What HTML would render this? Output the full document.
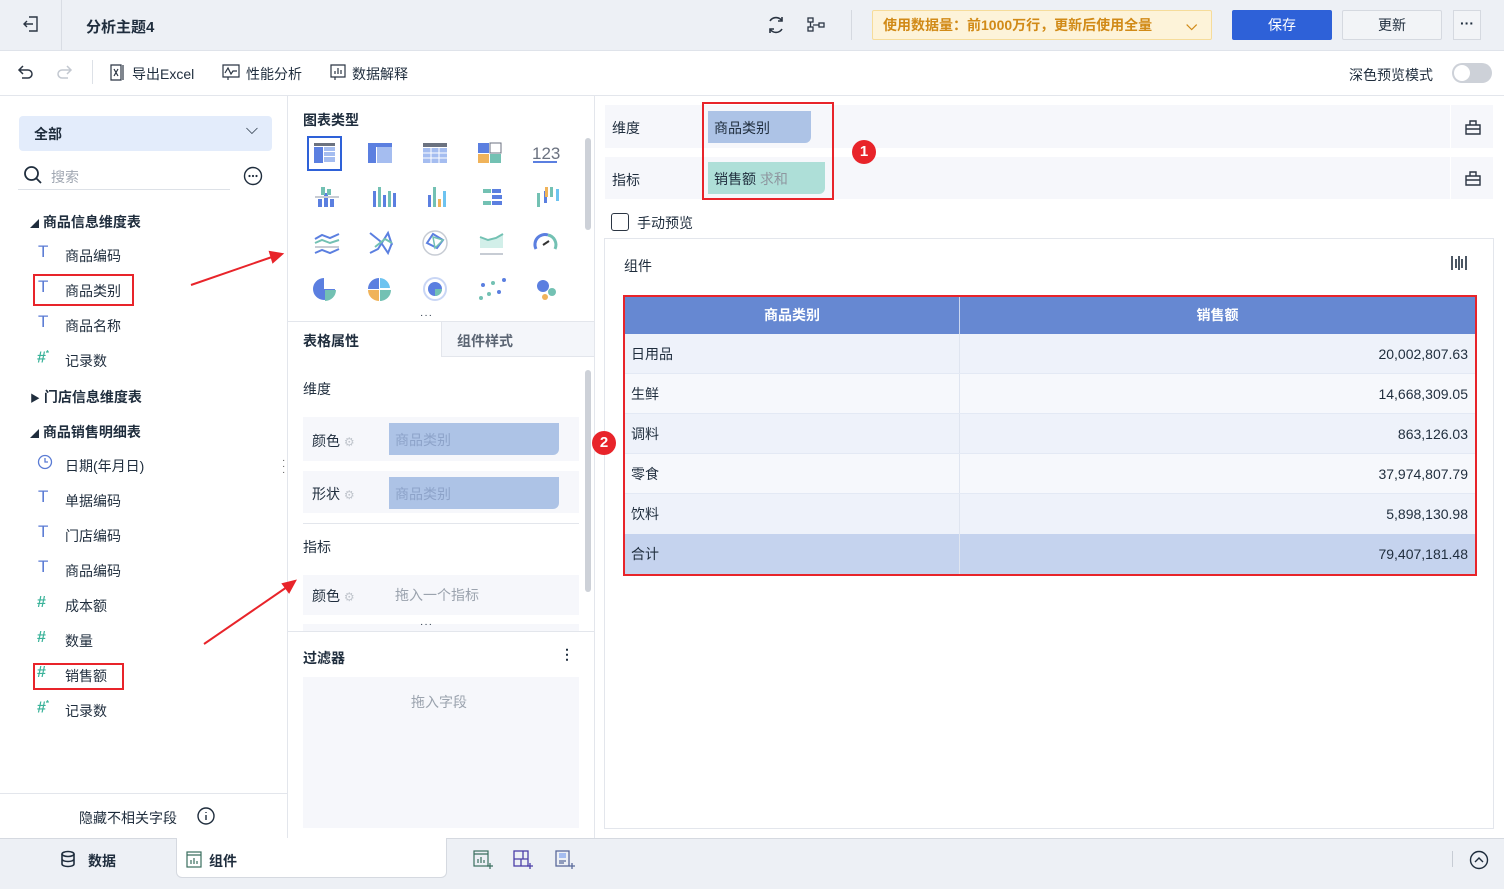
<!DOCTYPE html>
<html><head><meta charset="utf-8"><style>
*{box-sizing:border-box;margin:0;padding:0}
body{width:1504px;height:889px;overflow:hidden;font-family:"Liberation Sans","Noto Sans CJK SC",sans-serif;font-size:14px;color:#1f2d3d;background:#fff;position:relative}
.a{position:absolute}
.b{font-weight:bold}
.red{border:2px solid #e8242a}
.ti{color:#5a7bd4;font-size:17px}
.hs{color:#3bb39a;font-weight:bold;font-size:16px}
</style></head><body>
<!-- header -->
<div class="a" style="left:0;top:0;width:1504px;height:51px;background:#edf0f5;border-bottom:1px solid #dfe3ea"></div>
<div class="a" style="left:61px;top:0;width:1px;height:50px;background:#d9dde4"></div>
<svg class="a" style="left:22px;top:15px" width="18" height="18" viewBox="0 0 18 18" fill="none" stroke="#2b3543" stroke-width="1.4"><path d="M7 2h8v14H7M2 9h9M5 6L2 9l3 3"/></svg>
<div class="a b" style="left:86px;top:16px;font-size:15px">分析主题4</div>
<svg class="a" style="left:766px;top:15px" width="20" height="20" viewBox="0 0 20 20" fill="none" stroke="#2b3543" stroke-width="1.6"><path d="M4 6a7 7 0 0 1 12 0M16 14a7 7 0 0 1-12 0"/><path d="M16 2v4h-4M4 18v-4h4"/></svg>
<svg class="a" style="left:806px;top:15px" width="20" height="20" viewBox="0 0 20 20" fill="none" stroke="#2b3543" stroke-width="1.3"><rect x="2" y="3" width="5" height="4"/><rect x="2" y="12" width="5" height="4"/><rect x="13" y="8" width="5" height="4"/><path d="M4.5 7v5M7 10h6"/></svg>
<div class="a" style="left:851px;top:10px;width:1px;height:30px;background:#d5d9e0"></div>
<div class="a b" style="left:872px;top:10px;width:340px;height:30px;background:#fdf3d9;border:1px solid #f6dc9a;border-radius:2px;color:#d18a17;font-size:14px;line-height:28px;padding-left:10px">使用数据量：前1000万行，更新后使用全量<span style="position:absolute;right:14px;top:0">⌵</span></div>
<div class="a" style="left:1232px;top:10px;width:100px;height:30px;background:#2e61d8;border-radius:2px;color:#fff;text-align:center;line-height:30px">保存</div>
<div class="a" style="left:1342px;top:10px;width:100px;height:30px;background:#f2f4f7;border:1px solid #d5d9e0;border-radius:2px;text-align:center;line-height:28px">更新</div>
<div class="a b" style="left:1453px;top:10px;width:28px;height:30px;background:#f2f4f7;border:1px solid #d5d9e0;text-align:center;line-height:24px">···</div>
<!-- toolbar -->
<div class="a" style="left:0;top:95px;width:1504px;height:1px;background:#e3e6ec"></div>
<svg class="a" style="left:16px;top:63px" width="18" height="18" viewBox="0 0 18 18" fill="none" stroke="#2b3543" stroke-width="1.5"><path d="M4 7h8a4 4 0 0 1 0 8H6M7 3L3 7l4 4"/></svg>
<svg class="a" style="left:56px;top:63px" width="18" height="18" viewBox="0 0 18 18" fill="none" stroke="#c3c8d0" stroke-width="1.5"><path d="M14 7H6a4 4 0 0 0 0 8h6M11 3l4 4-4 4"/></svg>
<div class="a" style="left:92px;top:60px;width:1px;height:24px;background:#dde1e7"></div>
<svg class="a" style="left:109px;top:64px" width="16" height="17" viewBox="0 0 16 17" fill="none" stroke="#2b3543" stroke-width="1.2"><path d="M2 1h10v15H2zM14 1v15M5 5l4 7M9 5l-4 7"/></svg>
<div class="a" style="left:132px;top:64px">导出Excel</div>
<svg class="a" style="left:222px;top:64px" width="18" height="17" viewBox="0 0 18 17" fill="none" stroke="#2b3543" stroke-width="1.2"><path d="M1 1h16v12H1zM3 9l3-5 3 6 2-3h4M6 13v3"/></svg>
<div class="a" style="left:246px;top:64px">性能分析</div>
<svg class="a" style="left:329px;top:64px" width="18" height="17" viewBox="0 0 18 17" fill="none" stroke="#2b3543" stroke-width="1.2"><path d="M2 1h14v12H2zM6 10V7M9 10V4M12 10V6M6 13v3"/></svg>
<div class="a" style="left:352px;top:64px">数据解释</div>
<div class="a" style="left:1349px;top:65px">深色预览模式</div>
<div class="a" style="left:1452px;top:63px;width:40px;height:20px;background:#cdd1d8;border-radius:10px"><div style="position:absolute;left:2px;top:2px;width:16px;height:16px;background:#fff;border-radius:50%"></div></div>
<!-- left panel -->
<div class="a" style="left:287px;top:96px;width:1px;height:742px;background:#e3e6ec"></div>
<div class="a b" style="left:19px;top:116px;width:253px;height:35px;background:#e3ecfb;border-radius:4px;padding:8px 15px">全部<span style="position:absolute;right:14px;top:5px;font-weight:normal;font-size:16px">⌵</span></div>
<svg class="a" style="left:23px;top:165px" width="20" height="20" viewBox="0 0 20 20" fill="none" stroke="#1f2d3d" stroke-width="1.8"><circle cx="8.5" cy="8.5" r="6.5"/><path d="M13 13l5 5"/></svg>
<div class="a" style="left:51px;top:167px;color:#a0a7b2">搜索</div>
<div class="a" style="left:18px;top:189px;width:212px;height:1px;background:#dde1e7"></div>
<svg class="a" style="left:243px;top:166px" width="20" height="20" viewBox="0 0 20 20"><circle cx="10" cy="10" r="8.5" fill="none" stroke="#1f2d3d" stroke-width="1.4"/><circle cx="6.5" cy="10" r="1.1" fill="#1f2d3d"/><circle cx="10" cy="10" r="1.1" fill="#1f2d3d"/><circle cx="13.5" cy="10" r="1.1" fill="#1f2d3d"/></svg>
<div class="a b" style="left:30px;top:212px"><span style="font-size:9px">◢</span> 商品信息维度表</div>
<div class="a ti" style="left:38px;top:242px">T</div><div class="a" style="left:65px;top:246px">商品编码</div>
<div class="a ti" style="left:38px;top:277px">T</div><div class="a" style="left:65px;top:281px">商品类别</div>
<div class="a red" style="left:33px;top:274px;width:101px;height:32px"></div>
<div class="a ti" style="left:38px;top:312px">T</div><div class="a" style="left:65px;top:316px">商品名称</div>
<div class="a hs" style="left:37px;top:349px">#<sup style="font-size:8px">*</sup></div><div class="a" style="left:65px;top:351px">记录数</div>
<div class="a b" style="left:30px;top:387px"><span style="font-size:10px">▶</span> 门店信息维度表</div>
<div class="a b" style="left:30px;top:422px"><span style="font-size:9px">◢</span> 商品销售明细表</div>
<svg class="a" style="left:37px;top:454px" width="16" height="16" viewBox="0 0 16 16" fill="none" stroke="#5a7bd4" stroke-width="1.3"><circle cx="8" cy="8" r="6.5"/><path d="M8 4v4h3"/></svg>
<div class="a" style="left:65px;top:456px">日期(年月日)</div>
<div class="a ti" style="left:38px;top:487px">T</div><div class="a" style="left:65px;top:491px">单据编码</div>
<div class="a ti" style="left:38px;top:522px">T</div><div class="a" style="left:65px;top:526px">门店编码</div>
<div class="a ti" style="left:38px;top:557px">T</div><div class="a" style="left:65px;top:561px">商品编码</div>
<div class="a hs" style="left:37px;top:594px">#</div><div class="a" style="left:65px;top:596px">成本额</div>
<div class="a hs" style="left:37px;top:629px">#</div><div class="a" style="left:65px;top:631px">数量</div>
<div class="a hs" style="left:37px;top:664px">#</div><div class="a" style="left:65px;top:666px">销售额</div>
<div class="a red" style="left:33px;top:663px;width:91px;height:27px"></div>
<div class="a hs" style="left:37px;top:699px">#<sup style="font-size:8px">*</sup></div><div class="a" style="left:65px;top:701px">记录数</div>
<div class="a" style="left:0;top:793px;width:287px;height:1px;background:#e3e6ec"></div>
<div class="a" style="left:79px;top:808px">隐藏不相关字段</div>
<svg class="a" style="left:197px;top:807px" width="18" height="18" viewBox="0 0 18 18" fill="none" stroke="#1f2d3d" stroke-width="1.4"><circle cx="9" cy="9" r="8"/><path d="M9 8v5M9 5v1"/></svg>
<!-- arrows -->
<svg class="a" style="left:0;top:0" width="600" height="889"><g stroke="#e8242a" stroke-width="2" fill="#e8242a"><line x1="191" y1="285" x2="272" y2="257"/><polygon points="282,254 270,252 273,262"/><line x1="204" y1="644" x2="287" y2="587"/><polygon points="295,581 283,584 289,592"/></g></svg>
<div class="a" style="left:282px;top:458px;color:#555;font-size:10px;line-height:6px">·<br>·<br>·</div>
<!-- middle -->
<div class="a" style="left:594px;top:96px;width:1px;height:742px;background:#e3e6ec"></div>
<div class="a b" style="left:303px;top:110px">图表类型</div>
<div class="a" style="left:585px;top:138px;width:6px;height:92px;background:#cdd1d8;border-radius:3px"></div>
<svg class="a" style="left:305px;top:135px" width="260" height="170" viewBox="0 0 260 170">
<rect x="3" y="2" width="33" height="33" fill="none" stroke="#2e61d8" stroke-width="2"/>
<rect x="9" y="8" width="21" height="3" fill="#6b7280"/><rect x="9" y="12" width="9" height="16" fill="#5b7fe0"/><rect x="19" y="12" width="11" height="4" fill="#a5bdf0"/><rect x="19" y="17" width="11" height="4" fill="#a5bdf0"/><rect x="19" y="22" width="11" height="5" fill="#a5bdf0"/>
<rect x="63" y="8" width="24" height="4" fill="#5b7fe0"/><rect x="63" y="12" width="8" height="16" fill="#5b7fe0"/><rect x="72" y="12" width="15" height="16" fill="#a5bdf0"/>
<rect x="118" y="8" width="24" height="4" fill="#6b7280"/><rect x="118" y="13" width="24" height="15" fill="#a5bdf0"/><path d="M118 18h24M118 23h24M126 13v15M134 13v15" stroke="#fff"/>
<rect x="173" y="8" width="11" height="10" fill="#5b7fe0"/><rect x="185" y="8" width="11" height="10" fill="none" stroke="#6b7280"/><rect x="173" y="19" width="11" height="9" fill="#f0b35a"/><rect x="185" y="19" width="11" height="9" fill="#73c1b3"/>
<text x="227" y="24" font-size="17" fill="#6b7280" font-family="Liberation Sans">123</text><rect x="228" y="26" width="24" height="2" fill="#5b7fe0"/>
<g fill="#5b7fe0"><rect x="13" y="64" width="4" height="8"/><rect x="19" y="58" width="4" height="14"/><rect x="25" y="64" width="4" height="8"/><rect x="68" y="56" width="3" height="16"/><rect x="78" y="60" width="3" height="12"/><rect x="88" y="58" width="3" height="14"/><rect x="123" y="60" width="3" height="12"/><rect x="239" y="56" width="3" height="12"/></g>
<g fill="#73c1b3"><rect x="16" y="52" width="4" height="8"/><rect x="22" y="54" width="4" height="6"/><rect x="73" y="52" width="3" height="20"/><rect x="83" y="56" width="3" height="16"/><rect x="128" y="52" width="3" height="20"/><rect x="178" y="54" width="8" height="4"/><rect x="178" y="66" width="8" height="4"/><rect x="232" y="58" width="3" height="14"/><rect x="245" y="52" width="3" height="10"/></g>
<rect x="10" y="61" width="24" height="2" fill="#c7ccd4"/><rect x="133" y="64" width="3" height="8" fill="#f0b35a"/><rect x="138" y="56" width="3" height="16" fill="#6dc3f0"/>
<g fill="#5b7fe0"><rect x="187" y="54" width="9" height="4"/><rect x="187" y="60" width="10" height="4"/><rect x="187" y="66" width="10" height="4"/></g><rect x="240" y="52" width="3" height="10" fill="#f0b35a"/><rect x="251" y="54" width="3" height="12" fill="#6dc3f0"/>
<path d="M10 104l7-4 8 3 9-4M10 118l7-3 8 3 9-4" stroke="#5b7fe0" stroke-width="2" fill="none"/><path d="M10 108l7-3 8 3 9-3" stroke="#73c1b3" stroke-width="2" fill="none"/><rect x="10" y="111" width="24" height="2" fill="#c7ccd4"/>
<path d="M65 118l8-4 10-16 4 12M65 98l10 8 8 12 4-10" stroke="#5b7fe0" stroke-width="2" fill="none"/><path d="M70 112l10-8 7 4" stroke="#73c1b3" stroke-width="2" fill="none"/>
<circle cx="130" cy="108" r="12" fill="none" stroke="#c7ccd4" stroke-width="1.5"/><path d="M122 108l6-9 10 6-6 8z" stroke="#5b7fe0" stroke-width="2" fill="none"/><path d="M128 102l10 3-8 8z" stroke="#73c1b3" stroke-width="1.5" fill="none"/>
<path d="M175 102l8 3 8-2 7-4v14h-23z" fill="#d2efe9"/><path d="M175 102l8 3 8-2 7-4" stroke="#73c1b3" stroke-width="2" fill="none"/><rect x="175" y="118" width="23" height="2" fill="#c7ccd4"/>
<path d="M231 114a10 10 0 0 1 12-14" stroke="#5b7fe0" stroke-width="3" fill="none"/><path d="M243 100a10 10 0 0 1 7 14" stroke="#73c1b3" stroke-width="3" fill="none"/><path d="M238 110l6-4" stroke="#333" stroke-width="2"/>
<path d="M19 143a11 11 0 1 0 11 11h-11z" fill="#5b7fe0"/><path d="M20 155h11a11 11 0 0 1-11 11z" fill="#73c1b3"/>
<path d="M74 143a11 11 0 0 0-11 11h11z" fill="#5b7fe0"/><path d="M75 143a11 11 0 0 1 10 10h-10z" fill="#6dc3f0"/><path d="M63 155h11v11a11 11 0 0 1-11-11z" fill="#f0b35a"/><path d="M75 155h11a11 11 0 0 1-11 11z" fill="#73c1b3"/>
<circle cx="130" cy="154" r="11" fill="none" stroke="#c9d6f5" stroke-width="2"/><circle cx="130" cy="154" r="7" fill="#5b7fe0"/><path d="M130 154h7a7 7 0 0 1-7 7z" fill="#73c1b3"/>
<g fill="#5b7fe0"><circle cx="178" cy="150" r="2"/><circle cx="194" cy="157" r="2"/><circle cx="199" cy="145" r="2"/></g><g fill="#73c1b3"><circle cx="176" cy="163" r="2"/><circle cx="184" cy="159" r="2"/><circle cx="188" cy="148" r="2"/></g>
<circle cx="238" cy="151" r="6" fill="#5b7fe0"/><circle cx="247" cy="157" r="4" fill="#73c1b3"/><circle cx="240" cy="162" r="3" fill="#f0b35a"/>
</svg>
<div class="a" style="left:420px;top:310px;font-size:10px;letter-spacing:1px">···</div>
<div class="a" style="left:288px;top:321px;width:306px;height:1px;background:#e3e6ec"></div>
<div class="a" style="left:441px;top:322px;width:153px;height:35px;background:#f4f6fa;border-left:1px solid #e3e6ec;border-bottom:1px solid #e3e6ec"></div>
<div class="a b" style="left:303px;top:331px">表格属性</div>
<div class="a b" style="left:457px;top:331px;color:#5b6573">组件样式</div>
<div class="a" style="left:585px;top:370px;width:6px;height:222px;background:#cdd1d8;border-radius:3px"></div>
<div class="a" style="left:303px;top:379px">维度</div>
<div class="a" style="left:303px;top:417px;width:276px;height:44px;background:#f6f7fb"></div>
<div class="a" style="left:312px;top:431px">颜色 <span style="color:#c0c5cc;font-size:12px">⚙</span></div>
<div class="a" style="left:389px;top:423px;width:170px;height:32px;background:#adc3e6;border-radius:0 0 6px 0;color:#8da3c9;padding:7px 6px">商品类别</div>
<div class="a" style="left:303px;top:471px;width:276px;height:42px;background:#f6f7fb"></div>
<div class="a" style="left:312px;top:484px">形状 <span style="color:#c0c5cc;font-size:12px">⚙</span></div>
<div class="a" style="left:389px;top:477px;width:170px;height:32px;background:#adc3e6;border-radius:0 0 6px 0;color:#8da3c9;padding:7px 6px">商品类别</div>
<div class="a" style="left:303px;top:523px;width:276px;height:1px;background:#e3e6ec"></div>
<div class="a" style="left:303px;top:537px">指标</div>
<div class="a" style="left:303px;top:575px;width:276px;height:40px;background:#f6f7fb"></div>
<div class="a" style="left:312px;top:586px">颜色 <span style="color:#c0c5cc;font-size:12px">⚙</span></div>
<div class="a" style="left:395px;top:585px;color:#9ba3ae">拖入一个指标</div>
<div class="a" style="left:303px;top:624px;width:276px;height:7px;background:#f6f7fb"></div>
<div class="a" style="left:288px;top:631px;width:306px;height:1px;background:#e3e6ec"></div>
<div class="a" style="left:420px;top:619px;font-size:10px;letter-spacing:1px">···</div>
<div class="a b" style="left:303px;top:648px">过滤器</div>
<div class="a b" style="left:560px;top:646px">⋮</div>
<div class="a" style="left:303px;top:677px;width:276px;height:151px;background:#f6f7fb"></div>
<div class="a" style="left:411px;top:692px;color:#9ba3ae">拖入字段</div>
<!-- right -->
<div class="a" style="left:605px;top:105px;width:888px;height:43px;background:#f6f7fb"></div>
<div class="a" style="left:605px;top:157px;width:888px;height:42px;background:#f6f7fb"></div>
<div class="a" style="left:1450px;top:105px;width:1px;height:94px;background:#fff"></div>
<div class="a" style="left:612px;top:118px">维度</div>
<div class="a" style="left:612px;top:170px">指标</div>
<div class="a" style="left:708px;top:111px;width:103px;height:32px;background:#adc3e6;border-radius:0 0 6px 0;padding:7px 6px">商品类别</div>
<div class="a" style="left:708px;top:162px;width:117px;height:32px;background:#aedfd8;border-radius:0 0 6px 0;padding:7px 6px">销售额 <span style="color:#8e969f">求和</span></div>
<div class="a red" style="left:702px;top:102px;width:132px;height:98px"></div>
<div class="a b" style="left:852px;top:140px;width:24px;height:24px;border-radius:50%;background:#e8242a;color:#fff;text-align:center;line-height:24px;font-size:15px">1</div>
<svg class="a" style="left:1464px;top:118px" width="18" height="18" viewBox="0 0 18 18" fill="none" stroke="#2b3543" stroke-width="1.4"><path d="M2 7h14v9H2zM6 7V3h6v4M2 11h14"/></svg>
<svg class="a" style="left:1464px;top:169px" width="18" height="18" viewBox="0 0 18 18" fill="none" stroke="#2b3543" stroke-width="1.4"><path d="M2 7h14v9H2zM6 7V3h6v4M2 11h14"/></svg>
<div class="a" style="left:611px;top:213px;width:18px;height:18px;border:1.5px solid #2b3543;border-radius:3px"></div>
<div class="a" style="left:637px;top:213px">手动预览</div>
<div class="a" style="left:604px;top:238px;width:890px;height:591px;border:1px solid #e3e6ec"></div>
<div class="a" style="left:624px;top:256px">组件</div>
<svg class="a" style="left:1450px;top:255px" width="18" height="16" viewBox="0 0 18 16" stroke="#1f2d3d" stroke-width="1.6"><path d="M2 1v14M6 4v9M9 1v14M12 4v9M16 1v14"/></svg>
<div class="a" style="left:625px;top:297px;width:850px;height:277px">
<div style="height:37px;background:#6688d2;color:#fff;font-weight:bold;display:flex;line-height:37px;text-align:center"><div style="width:335px;border-right:1px solid #c9d6f0">商品类别</div><div style="flex:1">销售额</div></div>
<div style="height:40px;background:#eef2fa;display:flex;line-height:40px;border-bottom:1px solid #e3e9f4"><div style="width:335px;padding-left:6px;border-right:1px solid #dfe5f0">日用品</div><div style="flex:1;text-align:right;padding-right:7px">20,002,807.63</div></div>
<div style="height:40px;background:#f6f8fc;display:flex;line-height:40px;border-bottom:1px solid #e3e9f4"><div style="width:335px;padding-left:6px;border-right:1px solid #dfe5f0">生鲜</div><div style="flex:1;text-align:right;padding-right:7px">14,668,309.05</div></div>
<div style="height:40px;background:#eef2fa;display:flex;line-height:40px;border-bottom:1px solid #e3e9f4"><div style="width:335px;padding-left:6px;border-right:1px solid #dfe5f0">调料</div><div style="flex:1;text-align:right;padding-right:7px">863,126.03</div></div>
<div style="height:40px;background:#f6f8fc;display:flex;line-height:40px;border-bottom:1px solid #e3e9f4"><div style="width:335px;padding-left:6px;border-right:1px solid #dfe5f0">零食</div><div style="flex:1;text-align:right;padding-right:7px">37,974,807.79</div></div>
<div style="height:40px;background:#eef2fa;display:flex;line-height:40px"><div style="width:335px;padding-left:6px;border-right:1px solid #dfe5f0">饮料</div><div style="flex:1;text-align:right;padding-right:7px">5,898,130.98</div></div>
<div style="height:40px;background:#c5d3ee;display:flex;line-height:40px"><div style="width:335px;padding-left:6px;border-right:1px solid #dfe5f0">合计</div><div style="flex:1;text-align:right;padding-right:7px">79,407,181.48</div></div>
</div>
<div class="a red" style="left:623px;top:295px;width:854px;height:281px"></div>
<div class="a b" style="left:592px;top:431px;width:24px;height:24px;border-radius:50%;background:#e8242a;color:#fff;text-align:center;line-height:24px;font-size:15px">2</div>
<!-- bottom -->
<div class="a" style="left:0;top:838px;width:1504px;height:51px;background:#edf0f5;border-top:1px solid #d5d9e0"></div>
<div class="a" style="left:176px;top:838px;width:271px;height:40px;background:#fff;border:1px solid #d5d9e0;border-top:none;border-radius:0 0 6px 6px"></div>
<svg class="a" style="left:60px;top:850px" width="16" height="18" viewBox="0 0 16 18" fill="none" stroke="#1f2d3d" stroke-width="1.6"><ellipse cx="8" cy="4" rx="6" ry="2.5"/><path d="M2 4v10c0 1.5 2.7 2.5 6 2.5s6-1 6-2.5V4M2 9c0 1.5 2.7 2.5 6 2.5s6-1 6-2.5"/></svg>
<div class="a b" style="left:88px;top:851px">数据</div>
<svg class="a" style="left:186px;top:851px" width="16" height="17" viewBox="0 0 16 17" fill="none" stroke="#3a6e5e" stroke-width="1.2"><rect x="1" y="1" width="14" height="15"/><path d="M1 4h14M5 13V9M8 13V7M11 13V10"/></svg>
<div class="a b" style="left:209px;top:851px">组件</div>
<svg class="a" style="left:473px;top:850px" width="20" height="20" viewBox="0 0 20 20" fill="none" stroke="#3a6e5e" stroke-width="1.2"><rect x="1" y="1" width="14" height="15"/><path d="M1 4h14M5 13V9M8 13V7M11 13V10M17 13v6M14 16h6"/></svg>
<svg class="a" style="left:513px;top:850px" width="20" height="20" viewBox="0 0 20 20" fill="none" stroke="#4b3fa8" stroke-width="1.3"><rect x="1" y="1" width="14" height="15"/><path d="M1 9h14M8 9v7M10 1v8M17 13v6M14 16h6"/></svg>
<svg class="a" style="left:555px;top:850px" width="20" height="20" viewBox="0 0 20 20" fill="none" stroke="#5a6a9a" stroke-width="1.3"><rect x="1" y="1" width="13" height="15"/><rect x="4" y="3" width="7" height="5" fill="#a5bdf0" stroke="none"/><path d="M4 11h7M4 13h5M17 13v6M14 16h6"/></svg>
<div class="a" style="left:1452px;top:851px;width:1px;height:16px;background:#c7ccd4"></div>
<svg class="a" style="left:1469px;top:850px" width="20" height="20" viewBox="0 0 20 20" fill="none" stroke="#1f2d3d" stroke-width="1.4"><circle cx="10" cy="10" r="8.5"/><path d="M6 12l4-4 4 4"/></svg>
</body></html>
